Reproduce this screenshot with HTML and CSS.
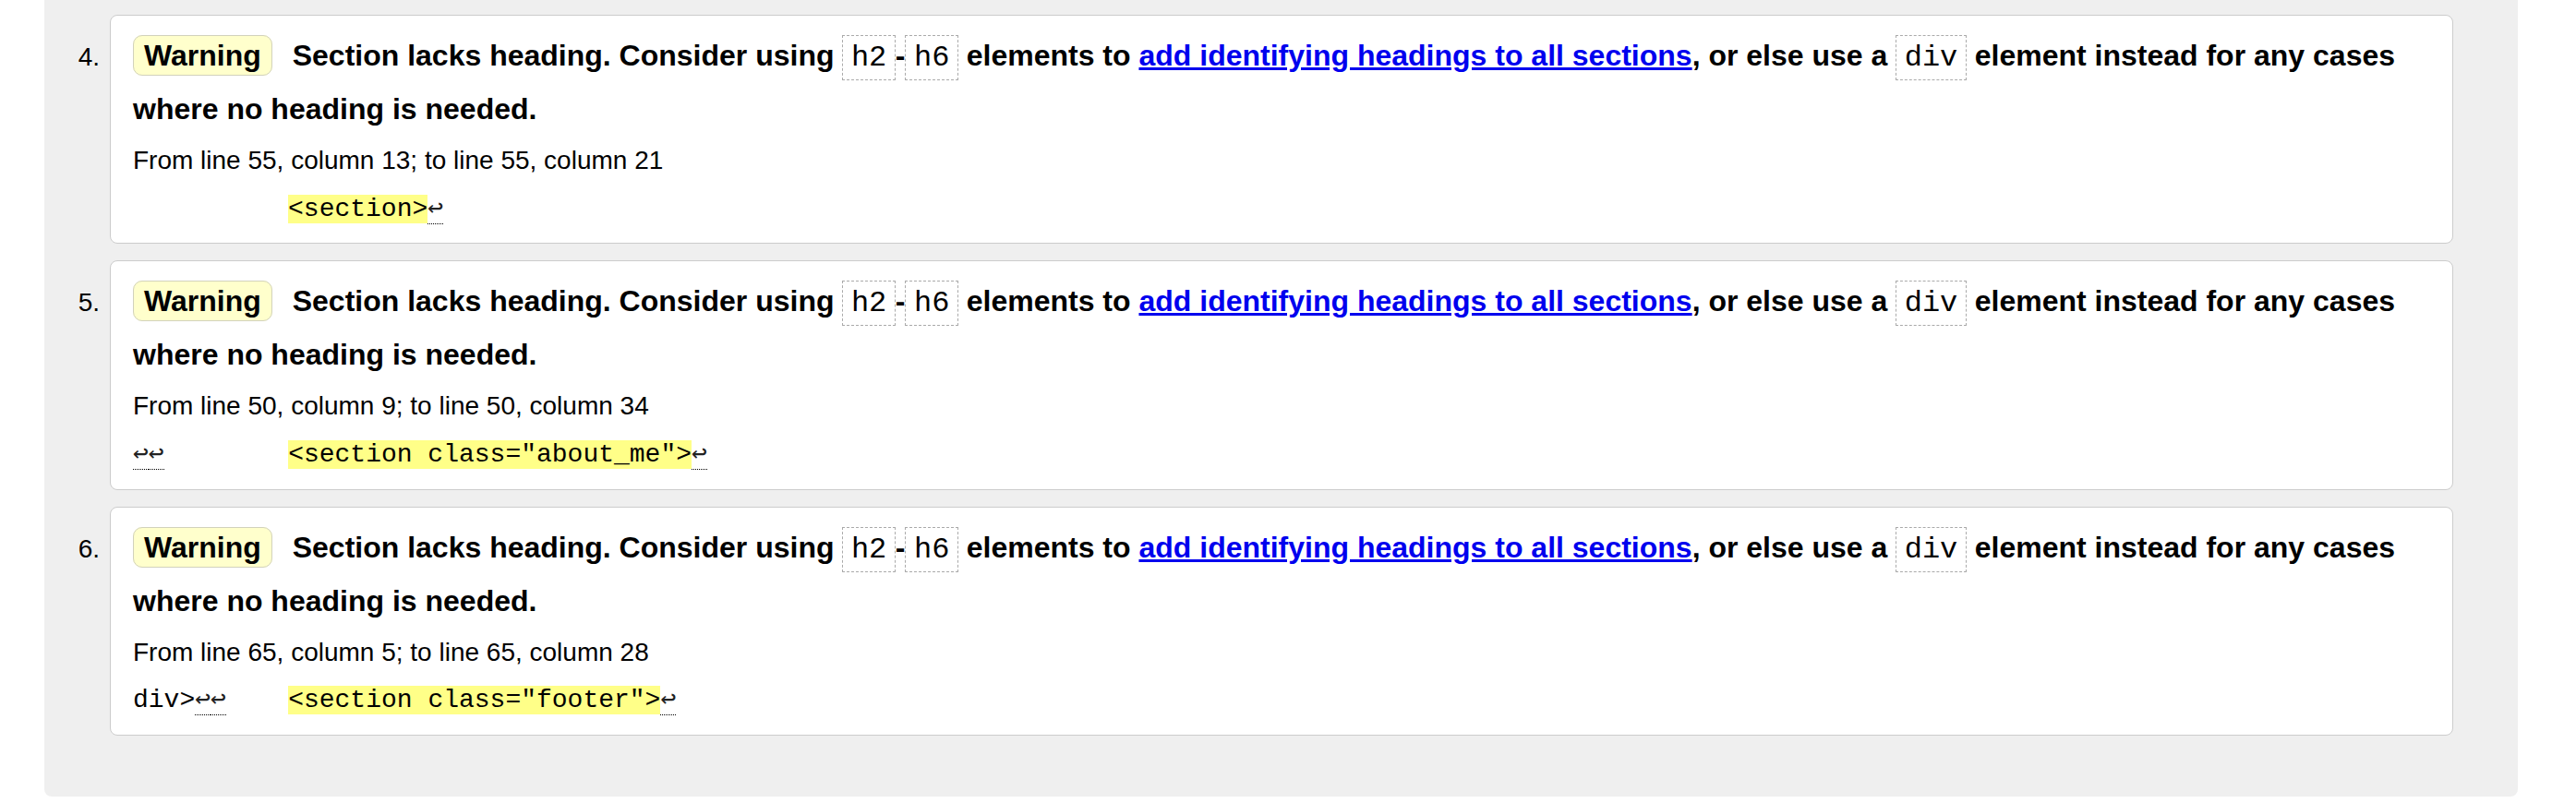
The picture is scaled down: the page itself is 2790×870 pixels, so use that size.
FILE: index.html
```html
<!DOCTYPE html>
<html lang="en">
<head>
<meta charset="utf-8">
<title>Validation messages</title>
<link rel="stylesheet" href="styles.css">
</head>
<body>
<div class="panel">
  <ol class="messages">
    <li class="item">
      <span class="num">4.</span>
      <div class="card">
        <p class="msg"><strong class="badge">Warning</strong> Section lacks heading. Consider using <code class="tag">h2</code>-<code class="tag">h6</code> elements to <a class="link" href="#">add identifying headings to all sections</a>, or else use a <code class="tag">div</code> element instead for any cases where no heading is needed.</p>
        <p class="loc">From line 55, column 13; to line 55, column 21</p>
        <p class="extract"><code class="src">          <mark class="hl">&lt;section&gt;</mark><b class="lf">↩</b></code></p>
      </div>
    </li>
    <li class="item">
      <span class="num">5.</span>
      <div class="card">
        <p class="msg"><strong class="badge">Warning</strong> Section lacks heading. Consider using <code class="tag">h2</code>-<code class="tag">h6</code> elements to <a class="link" href="#">add identifying headings to all sections</a>, or else use a <code class="tag">div</code> element instead for any cases where no heading is needed.</p>
        <p class="loc">From line 50, column 9; to line 50, column 34</p>
        <p class="extract"><code class="src"><b class="lf">↩</b><b class="lf">↩</b>        <mark class="hl">&lt;section class="about_me"&gt;</mark><b class="lf">↩</b></code></p>
      </div>
    </li>
    <li class="item">
      <span class="num">6.</span>
      <div class="card">
        <p class="msg"><strong class="badge">Warning</strong> Section lacks heading. Consider using <code class="tag">h2</code>-<code class="tag">h6</code> elements to <a class="link" href="#">add identifying headings to all sections</a>, or else use a <code class="tag">div</code> element instead for any cases where no heading is needed.</p>
        <p class="loc">From line 65, column 5; to line 65, column 28</p>
        <p class="extract"><code class="src">div&gt;<b class="lf">↩</b><b class="lf">↩</b>    <mark class="hl">&lt;section class="footer"&gt;</mark><b class="lf">↩</b></code></p>
      </div>
    </li>
  </ol>
</div>
</body>
</html>
```
FILE: styles.css
```css
html, body {
  margin: 0;
  padding: 0;
  background: #ffffff;
}

body {
  font-family: "Liberation Sans", Arial, Helvetica, sans-serif;
  color: #000;
}

.panel {
  margin-left: 48px;
  width: 2679px;
  box-sizing: border-box;
  background: #efefef;
  border-radius: 0 0 8px 8px;
  padding: 16px 70px 66px 0;
}

.messages {
  list-style: none;
  margin: 0;
  padding: 0;
  display: flex;
  flex-direction: column;
  gap: 18px;
}

.item {
  display: flex;
  align-items: baseline;
}

.num {
  flex: none;
  width: 71px;
  box-sizing: border-box;
  padding-right: 11px;
  text-align: right;
  font-size: 28px;
}

.card {
  flex: 1;
  min-width: 0;
  background: #fff;
  border: 1px solid #cccccc;
  border-radius: 8px;
  padding: 14px 24px 11.75px 24px;
}

.msg {
  margin: 0;
  font-size: 32px;
  font-weight: bold;
  line-height: 58px;
}

.badge {
  display: inline;
  background: #ffffcc;
  border: 1px solid #d2d2bc;
  border-radius: 10px;
  padding: 3px 11px;
  margin-right: 13px;
}

.tag {
  font-family: "Liberation Mono", "Courier New", monospace;
  font-size: 32px;
  font-weight: normal;
  line-height: 1;
  border: 1px dashed #aaaaaa;
  padding: 5px 8.5px;
}

.link {
  color: #0000ee;
  text-decoration: underline;
}

.loc {
  margin: 2px 0 0 0;
  font-size: 28px;
  line-height: 50px;
}

.extract {
  margin: 2.5px 0 0 0;
  font-family: "Liberation Mono", "Courier New", monospace;
  font-size: 28px;
  line-height: 50px;
  white-space: pre;
}

.src {
  font-family: inherit;
  font-size: 28px;
}

.hl {
  background: #ffff88;
  color: #000;
}

.lf {
  font-weight: normal;
  line-height: 1;
  color: #222222;
  border-bottom: 1px dotted #000000;
}
```
